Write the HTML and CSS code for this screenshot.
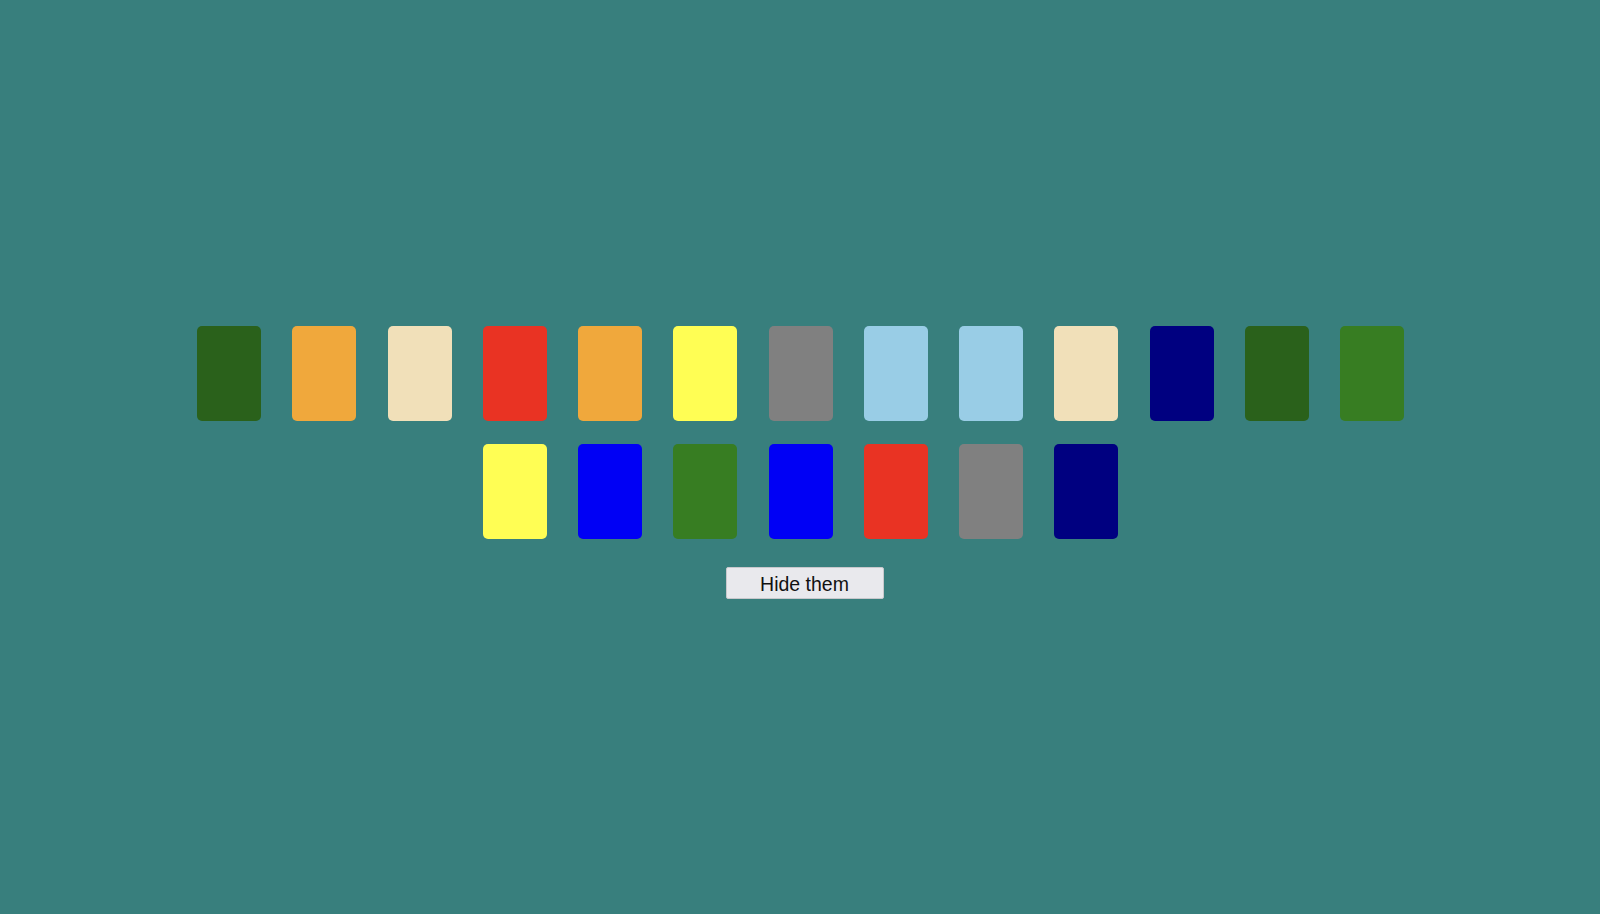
FILE: index.html
```html
<!DOCTYPE html>
<html lang="en">
<head>
<meta charset="utf-8">
<title>Cards</title>
<link rel="stylesheet" href="styles.css">
</head>
<body>
<main class="board">
  <div class="cards">
    <div class="card c-darkgreen"></div>
    <div class="card c-orange"></div>
    <div class="card c-wheat"></div>
    <div class="card c-red"></div>
    <div class="card c-orange"></div>
    <div class="card c-yellow"></div>
    <div class="card c-gray"></div>
    <div class="card c-lightblue"></div>
    <div class="card c-lightblue"></div>
    <div class="card c-wheat"></div>
    <div class="card c-navy"></div>
    <div class="card c-darkgreen"></div>
    <div class="card c-green"></div>
    <div class="card c-yellow"></div>
    <div class="card c-blue"></div>
    <div class="card c-green"></div>
    <div class="card c-blue"></div>
    <div class="card c-red"></div>
    <div class="card c-gray"></div>
    <div class="card c-navy"></div>
  </div>
  <button class="toggle" type="button">Hide them</button>
</main>
</body>
</html>
```

FILE: styles.css
```css
html, body {
  margin: 0;
  padding: 0;
}

body {
  background: #387f7d;
  width: 1600px;
  height: 914px;
  overflow: hidden;
  font-family: "Liberation Sans", Arial, sans-serif;
}

.board {
  display: flex;
  flex-direction: column;
  align-items: center;
  padding-top: 326px;
}

.cards {
  width: 1240px;
  display: flex;
  flex-wrap: wrap;
  justify-content: center;
  column-gap: 31.25px;
  row-gap: 23px;
  padding-left: 1px;
}

.card {
  width: 64px;
  height: 95px;
  border-radius: 5px;
}

.c-darkgreen { background: #2a611b; }
.c-orange { background: #f0a83c; }
.c-wheat { background: #f1e0b9; }
.c-red { background: #e93323; }
.c-yellow { background: #fffe54; }
.c-gray { background: #808080; }
.c-lightblue { background: #99cde6; }
.c-navy { background: #000080; }
.c-green { background: #377d22; }
.c-blue { background: #0000f5; }

.toggle {
  margin-top: 28px;
  margin-left: 9px;
  width: 158px;
  height: 32px;
  padding: 2px 0 0;
  background: #e9e9ed;
  border: 1px solid #c8c8cc;
  border-radius: 2px;
  font-family: "Liberation Sans", Arial, sans-serif;
  font-size: 19.5px;
  color: #111;
}
```
